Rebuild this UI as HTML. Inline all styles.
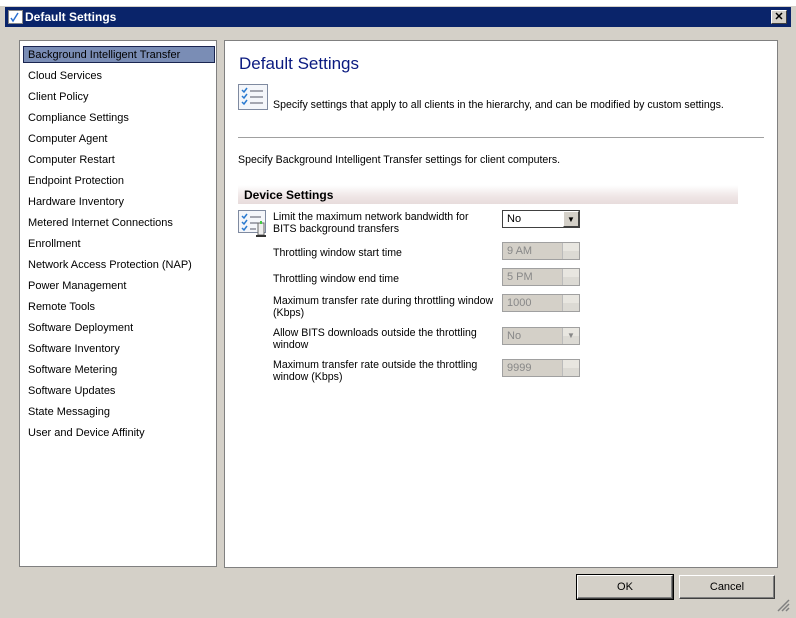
<!DOCTYPE html><html><head><style>
body{margin:0;width:796px;height:618px;background:#d4d0c8;font-family:"Liberation Sans",sans-serif;font-size:11px;position:relative;overflow:hidden;color:#000}
.a{position:absolute}
#tb{left:5px;top:7px;width:786px;height:20px;background:#0a246a;color:#fff;font-weight:bold;font-size:12px}
#lp{left:19px;top:40px;width:196px;height:525px;background:#fff;border:1px solid #808080}
#rp{left:224px;top:40px;width:552px;height:526px;background:#fff;border:1px solid #808080}
.li{position:absolute;left:8px;font-size:11px}
.btn{background:#d4d0c8;border:1px solid;border-color:#fff #404040 #404040 #fff;box-shadow:inset -1px -1px #808080;text-align:center;line-height:22px;font-size:11px}
.r{font-size:10.6px}
.lab{position:absolute;left:273px;font-size:10.6px;line-height:12px;width:228px;white-space:nowrap}
.fld{position:absolute;left:502px;width:78px;height:18px;border:1px solid #a0a0a0;background:#d4d0c8;color:#888;box-sizing:border-box;padding-left:4px;line-height:16px}
.sp{position:absolute;right:0;top:0;width:16px;height:16px;border-left:1px solid #bbb;background:linear-gradient(#e8e6e0 50%,#dcdad4 50%)}
</style></head><body>
<div class="a" style="left:0;top:0;width:796px;height:6px;background:#fff"></div>
<div class="a" id="tb"><svg class="a" style="left:3px;top:3px" width="15" height="14"><rect x="0.5" y="0.5" width="14" height="13" fill="#fff" stroke="#888"/><path d="M3 8l2 3 5-8" stroke="#2a6fd0" stroke-width="1.5" fill="none"/></svg><span class="a" style="left:20px;top:3px">Default Settings</span>
<div class="a" style="right:4px;top:3px;width:14px;height:12px;background:#d4d0c8;border:1px solid;border-color:#fff #404040 #404040 #fff;color:#000;text-align:center;line-height:12px;font-size:11px">✕</div></div>
<div class="a" id="lp">
<div class="a" style="left:3px;top:5px;width:190px;height:15px;background:#7a8db5;border:1px solid #1a2550"></div>
<div class="li" style="top:8px">Background Intelligent Transfer</div>
<div class="li" style="top:29px">Cloud Services</div>
<div class="li" style="top:50px">Client Policy</div>
<div class="li" style="top:71px">Compliance Settings</div>
<div class="li" style="top:92px">Computer Agent</div>
<div class="li" style="top:113px">Computer Restart</div>
<div class="li" style="top:134px">Endpoint Protection</div>
<div class="li" style="top:155px">Hardware Inventory</div>
<div class="li" style="top:176px">Metered Internet Connections</div>
<div class="li" style="top:197px">Enrollment</div>
<div class="li" style="top:218px">Network Access Protection (NAP)</div>
<div class="li" style="top:239px">Power Management</div>
<div class="li" style="top:260px">Remote Tools</div>
<div class="li" style="top:281px">Software Deployment</div>
<div class="li" style="top:302px">Software Inventory</div>
<div class="li" style="top:323px">Software Metering</div>
<div class="li" style="top:344px">Software Updates</div>
<div class="li" style="top:365px">State Messaging</div>
<div class="li" style="top:386px">User and Device Affinity</div>
</div>
<div class="a" id="rp"></div>
<div class="a" style="left:239px;top:54px;font-size:17px;color:#0a1a80">Default Settings</div>
<svg class="a" style="left:238px;top:84px" width="30" height="26"><rect x="0.5" y="0.5" width="29" height="25" fill="#f4f6fa" stroke="#7f8aa0"/><path d="M4 6l2 2 3-4M4 12l2 2 3-4M4 18l2 2 3-4" stroke="#2a7ad0" stroke-width="1.5" fill="none"/><path d="M12 7h13M12 13h13M12 19h13" stroke="#556"/></svg>
<div class="a r" style="left:273px;top:99px">Specify settings that apply to all clients in the hierarchy, and can be modified by custom settings.</div>
<div class="a" style="left:238px;top:137px;width:526px;height:1px;background:#a0a0a0"></div>
<div class="a r" style="left:238px;top:154px">Specify Background Intelligent Transfer settings for client computers.</div>
<div class="a" style="left:238px;top:185px;width:500px;height:19px;background:linear-gradient(#fff,#efe6e6 60%,#e8dcdc)"></div>
<div class="a" style="left:244px;top:188px;font-weight:bold;font-size:12px">Device Settings</div>
<svg class="a" style="left:238px;top:210px" width="30" height="28"><rect x="0.5" y="0.5" width="27" height="22" fill="#f4f6fa" stroke="#7f8aa0"/><path d="M4 6l2 2 3-4M4 12l2 2 3-4M4 18l2 2 3-4" stroke="#2a7ad0" stroke-width="1.5" fill="none"/><path d="M12 7h11M12 13h8M12 19h6" stroke="#556"/><rect x="20" y="13" width="6" height="12" fill="#eee" stroke="#666"/><rect x="22" y="11" width="2" height="3" fill="#4c4"/><path d="M18 26h10" stroke="#333" stroke-width="2"/></svg>
<div class="lab" style="top:211px">Limit the maximum network bandwidth for<br>BITS background transfers</div>
<div class="fld" style="top:210px;background:#fff;color:#000;border-color:#404040">No<div class="sp" style="background:#d4d0c8;border:1px solid;border-color:#fff #404040 #404040 #fff;box-sizing:border-box;font-size:8px;text-align:center;color:#000">▼</div></div>
<div class="lab" style="top:247px">Throttling window start time</div>
<div class="fld" style="top:242px">9 AM<div class="sp"></div></div>
<div class="lab" style="top:273px">Throttling window end time</div>
<div class="fld" style="top:268px">5 PM<div class="sp"></div></div>
<div class="lab" style="top:295px">Maximum transfer rate during throttling window<br>(Kbps)</div>
<div class="fld" style="top:294px">1000<div class="sp"></div></div>
<div class="lab" style="top:327px">Allow BITS downloads outside the throttling<br>window</div>
<div class="fld" style="top:327px">No<div class="sp" style="font-size:8px;text-align:center">▼</div></div>
<div class="lab" style="top:359px">Maximum transfer rate outside the throttling<br>window (Kbps)</div>
<div class="fld" style="top:359px">9999<div class="sp"></div></div>
<div class="a btn" style="left:577px;top:575px;width:94px;height:22px;outline:1px solid #000">OK</div>
<div class="a btn" style="left:679px;top:575px;width:94px;height:22px">Cancel</div>
<svg class="a" style="left:776px;top:598px" width="14" height="14"><path d="M13 2L2 13M13 6L6 13M13 10L10 13" stroke="#808080" stroke-width="1.5"/></svg>
</body></html>
